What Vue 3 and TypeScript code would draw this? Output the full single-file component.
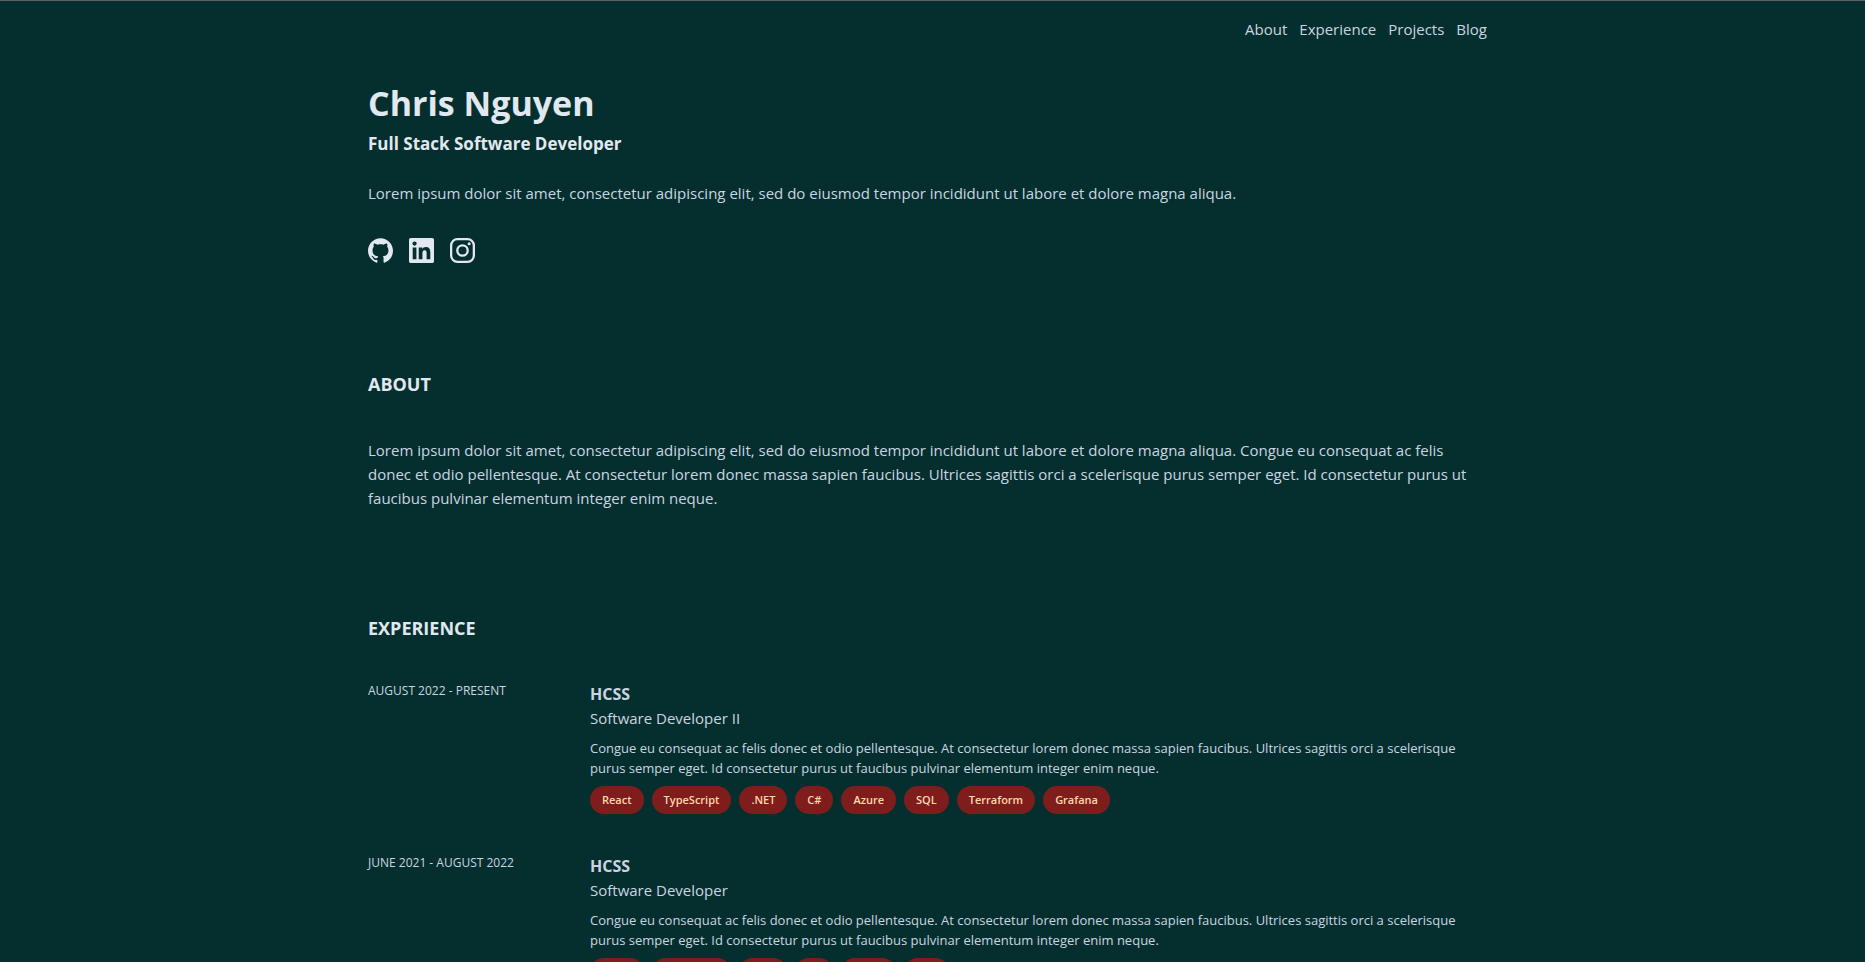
<script setup lang="ts">
interface Job {
  dates: string
  company: string
  role: string
  summary: string
  skills: string[]
}

const links: string[] = ['About', 'Experience', 'Projects', 'Blog']

const summary =
  'Congue eu consequat ac felis donec et odio pellentesque. At consectetur lorem donec massa sapien faucibus. Ultrices sagittis orci a scelerisque purus semper eget. Id consectetur purus ut faucibus pulvinar elementum integer enim neque.'

const jobs: Job[] = [
  {
    dates: 'August 2022 - Present',
    company: 'HCSS',
    role: 'Software Developer II',
    summary,
    skills: ['React', 'TypeScript', '.NET', 'C#', 'Azure', 'SQL', 'Terraform', 'Grafana'],
  },
  {
    dates: 'June 2021 - August 2022',
    company: 'HCSS',
    role: 'Software Developer',
    summary,
    skills: ['React', 'TypeScript', '.NET', 'C#', 'Azure', 'SQL'],
  },
]
</script>

<template>
  <div class="page">
    <div class="container">
      <nav class="nav">
        <a v-for="link in links" :key="link" :href="'#' + link.toLowerCase()">{{ link }}</a>
      </nav>

      <header class="intro">
        <h1>Chris Nguyen</h1>
        <h2>Full Stack Software Developer</h2>
        <p>Lorem ipsum dolor sit amet, consectetur adipiscing elit, sed do eiusmod tempor incididunt ut labore et dolore magna aliqua.</p>
        <div class="social">
          <a href="#github" aria-label="GitHub">
            <svg viewBox="0 0 24 24"><path d="M12 .297c-6.63 0-12 5.373-12 12 0 5.303 3.438 9.8 8.205 11.385.6.113.82-.258.82-.577 0-.285-.01-1.04-.015-2.04-3.338.724-4.042-1.61-4.042-1.61C4.422 18.07 3.633 17.7 3.633 17.7c-1.087-.744.084-.729.084-.729 1.205.084 1.838 1.236 1.838 1.236 1.07 1.835 2.809 1.305 3.495.998.108-.776.417-1.305.76-1.605-2.665-.3-5.466-1.332-5.466-5.93 0-1.31.465-2.38 1.235-3.22-.135-.303-.54-1.523.105-3.176 0 0 1.005-.322 3.3 1.23.96-.267 1.98-.399 3-.405 1.02.006 2.04.138 3 .405 2.28-1.552 3.285-1.23 3.285-1.23.645 1.653.24 2.873.12 3.176.765.84 1.23 1.91 1.23 3.22 0 4.61-2.805 5.625-5.475 5.92.42.36.81 1.096.81 2.22 0 1.606-.015 2.896-.015 3.286 0 .315.21.69.825.57C20.565 22.092 24 17.592 24 12.297c0-6.627-5.373-12-12-12" /></svg>
          </a>
          <a href="#linkedin" aria-label="LinkedIn">
            <svg viewBox="0 0 24 24"><path d="M20.447 20.452h-3.554v-5.569c0-1.328-.027-3.037-1.852-3.037-1.853 0-2.136 1.445-2.136 2.939v5.667H9.351V9h3.414v1.561h.046c.477-.9 1.637-1.85 3.37-1.85 3.601 0 4.267 2.37 4.267 5.455v6.286zM5.337 7.433a2.062 2.062 0 1 1 0-4.125 2.062 2.062 0 0 1 0 4.125zM7.119 20.452H3.555V9h3.564v11.452zM22.225 0H1.771C.792 0 0 .774 0 1.729v20.542C0 23.227.792 24 1.771 24h20.451C23.2 24 24 23.227 24 22.271V1.729C24 .774 23.2 0 22.222 0h.003z" /></svg>
          </a>
          <a href="#instagram" aria-label="Instagram">
            <svg viewBox="0 0 24 24"><g class="outline"><rect x="1.1" y="1.1" width="21.8" height="21.8" rx="6" /><circle cx="12" cy="12" r="5" /></g><circle cx="18.4" cy="5.6" r="1.45" /></svg>
          </a>
        </div>
      </header>

      <section id="about" class="about">
        <h3>About</h3>
        <p>Lorem ipsum dolor sit amet, consectetur adipiscing elit, sed do eiusmod tempor incididunt ut labore et dolore magna aliqua. Congue eu consequat ac felis donec et odio pellentesque. At consectetur lorem donec massa sapien faucibus. Ultrices sagittis orci a scelerisque purus semper eget. Id consectetur purus ut faucibus pulvinar elementum integer enim neque.</p>
      </section>

      <section id="experience" class="experience">
        <h3>Experience</h3>
        <article v-for="job in jobs" :key="job.dates" class="job">
          <div class="dates">{{ job.dates }}</div>
          <div class="details">
            <h4>{{ job.company }}</h4>
            <div class="role">{{ job.role }}</div>
            <p>{{ job.summary }}</p>
            <ul class="skills">
              <li v-for="skill in job.skills" :key="skill">{{ skill }}</li>
            </ul>
          </div>
        </article>
      </section>
    </div>
  </div>
</template>

<style>
html {
  background: #042f2e;
  scrollbar-width: none;
}
body {
  margin: 0;
}
</style>

<style scoped>
.page {
  min-height: 100vh;
  box-sizing: border-box;
  border-top: 1px solid #5c6262;
  background: #042f2e;
  color: #cbd5e1;
  font-family: "Segoe UI", "Open Sans", "Noto Sans", sans-serif;
  font-size: 15px;
  line-height: 24px;
}
.container {
  max-width: 1129px;
  margin: 0 auto;
  padding: 0 24px;
}
h1, h2, h3, h4, p, ul {
  margin: 0;
  padding: 0;
}
a {
  color: inherit;
  text-decoration: none;
}
.nav {
  display: flex;
  justify-content: flex-end;
  gap: 12px;
  padding: 16px 10px 0 0;
}
.intro {
  padding-top: 42px;
}
h1 {
  color: #e2e8f0;
  font-size: 34px;
  line-height: 40px;
  font-weight: 700;
}
h2, h3 {
  color: #e2e8f0;
  line-height: 28px;
  font-weight: 700;
}
h2 {
  margin-top: 7px;
  font-size: 17px;
}
.intro p {
  margin-top: 23px;
}
.social {
  display: flex;
  gap: 16px;
  margin-top: 33px;
  color: #e2e8f0;
}
.social svg {
  display: block;
  width: 25px;
  height: 25px;
  fill: currentColor;
}
.outline {
  fill: none;
  stroke: currentColor;
  stroke-width: 2.2;
}
.about {
  padding: 107px 19px 0 0;
}
h3 {
  font-size: 18px;
  text-transform: uppercase;
}
.about p {
  margin-top: 40px;
}
.experience {
  padding: 104px 19px 0 0;
}
.experience h3 {
  margin-bottom: 40px;
}
.job {
  display: grid;
  grid-template-columns: 222px 1fr;
  margin-bottom: 40px;
}
.dates {
  font-size: 12px;
  line-height: 18px;
  text-transform: uppercase;
}
h4 {
  font-size: 16px;
  line-height: 24px;
  font-weight: 700;
}
.details p {
  margin-top: 8px;
  font-size: 13px;
  line-height: 20px;
}
.skills {
  display: flex;
  flex-wrap: wrap;
  gap: 8px;
  margin-top: 8px;
  list-style: none;
}
.skills li {
  padding: 4px 12px;
  border-radius: 14px;
  background: #7f1d1d;
  color: #fed7aa;
  font-size: 11px;
  line-height: 20px;
  font-weight: 600;
}
</style>
